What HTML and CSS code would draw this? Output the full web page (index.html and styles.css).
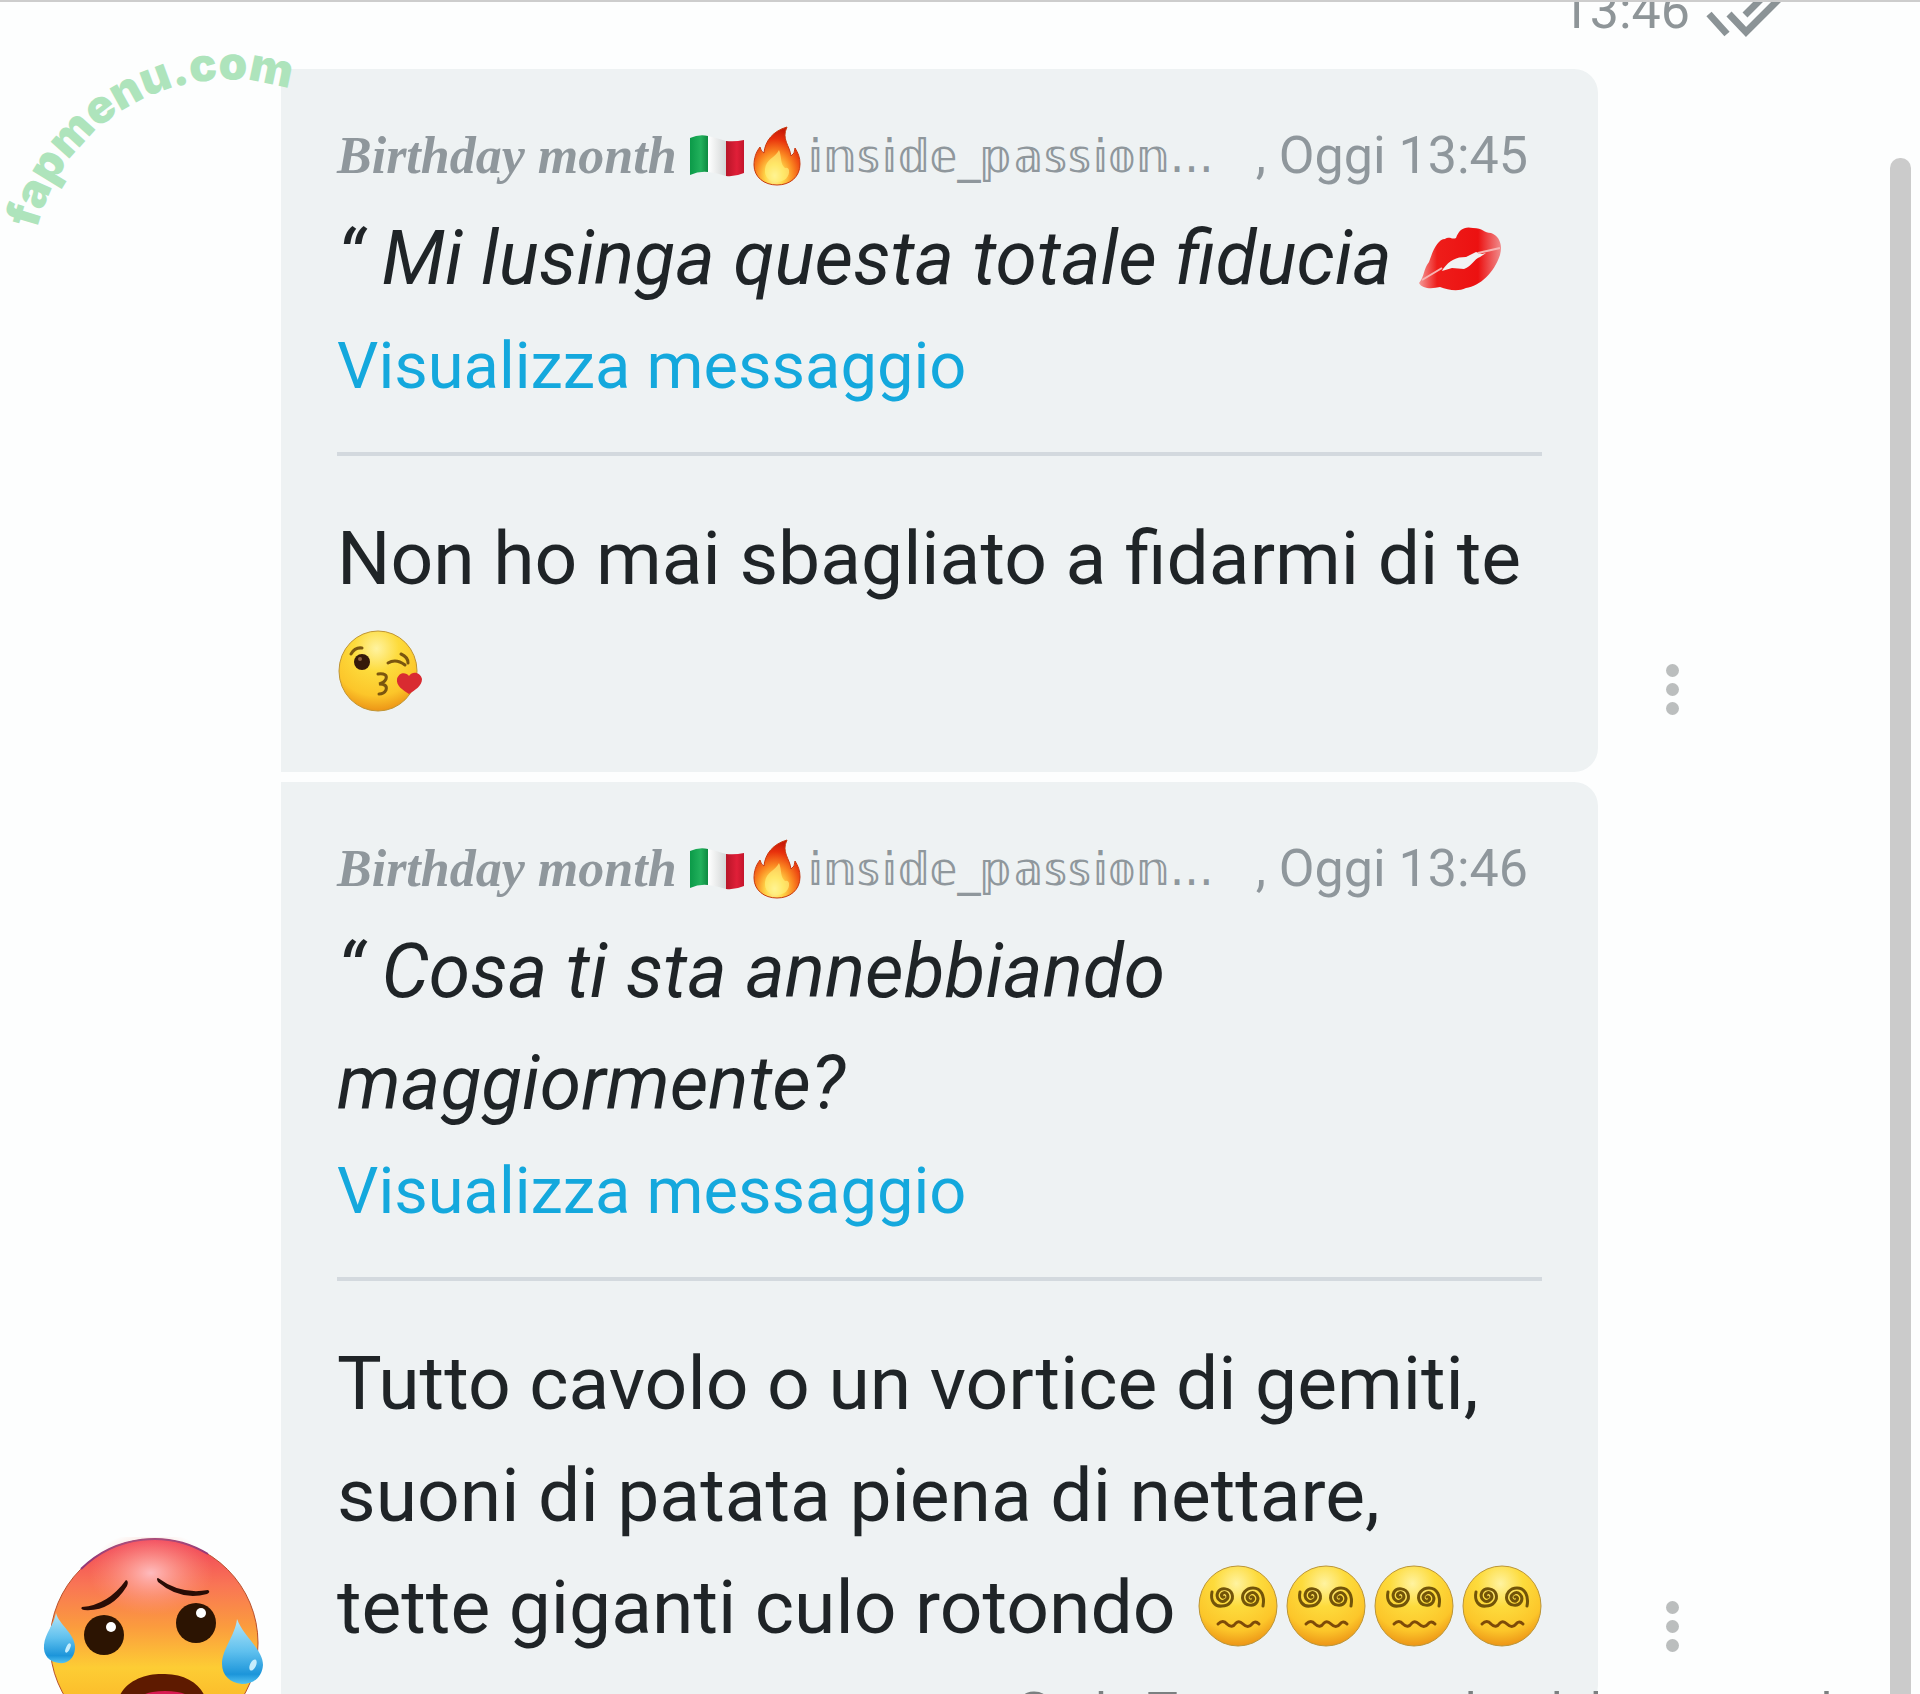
FILE: index.html
```html
<!DOCTYPE html>
<html lang="it">
<head>
<meta charset="utf-8">
<title>Messaggi</title>
<link rel="stylesheet" href="styles.css">
</head>
<body>
<svg class="defs" aria-hidden="true">
  <defs>
    <radialGradient id="face" cx="48%" cy="22%" r="82%">
      <stop offset="0" stop-color="#fff3a0"/><stop offset=".35" stop-color="#fddb3c"/><stop offset=".72" stop-color="#fcc62a"/><stop offset="1" stop-color="#e98a12"/>
    </radialGradient>
    <linearGradient id="hot" x1="0" y1="0" x2="0" y2="1">
      <stop offset="0" stop-color="#f0405a"/><stop offset=".22" stop-color="#f97555"/><stop offset=".42" stop-color="#fb9b3e"/><stop offset=".62" stop-color="#fdcd34"/><stop offset="1" stop-color="#f9a21c"/>
    </linearGradient>
    <radialGradient id="glow" cx="50%" cy="50%" r="50%">
      <stop offset="0" stop-color="#ffc0c4" stop-opacity=".95"/><stop offset="1" stop-color="#ff9a80" stop-opacity="0"/>
    </radialGradient>
    <linearGradient id="drop" x1="0" y1="0" x2="0" y2="1">
      <stop offset="0" stop-color="#b5e6f8"/><stop offset=".5" stop-color="#5fc0ee"/><stop offset=".85" stop-color="#1c95da"/><stop offset="1" stop-color="#55c4f2"/>
    </linearGradient>
    <radialGradient id="flame" cx="45%" cy="84%" r="80%">
      <stop offset="0" stop-color="#fffbc0"/><stop offset=".25" stop-color="#ffd84a"/><stop offset=".5" stop-color="#fb8a22"/><stop offset=".8" stop-color="#e8300c"/><stop offset="1" stop-color="#c81a08"/>
    </radialGradient>
    <linearGradient id="lip" x1="0" y1="0" x2="1" y2="0">
      <stop offset="0" stop-color="#f49a98"/><stop offset=".22" stop-color="#ee1d1a"/><stop offset=".72" stop-color="#ec1111"/><stop offset="1" stop-color="#f08c8c"/>
    </linearGradient>
    <linearGradient id="green" x1="0" y1="0" x2="1" y2="0"><stop offset="0" stop-color="#0b9a48"/><stop offset=".6" stop-color="#22b15c"/><stop offset="1" stop-color="#0d8a40"/></linearGradient>
    <linearGradient id="white" x1="0" y1="0" x2="1" y2="0"><stop offset="0" stop-color="#fff"/><stop offset="1" stop-color="#d4d7d7"/></linearGradient>
    <linearGradient id="red" x1="0" y1="0" x2="1" y2="0"><stop offset="0" stop-color="#b81528"/><stop offset=".6" stop-color="#e01f38"/><stop offset="1" stop-color="#c4162c"/></linearGradient>
  </defs>
  <symbol id="flag" viewBox="0 0 56 42">
    <path d="M1 3Q10-1 19 1V37Q10 36 1 40Z" fill="url(#green)"/>
    <path d="M19 1Q28 3 37 6V41Q28 38 19 37Z" fill="url(#white)"/>
    <path d="M37 6Q46 7 55 5V38Q46 42 37 41Z" fill="url(#red)"/>
  </symbol>
  <symbol id="fire" viewBox="0 0 48 60">
    <path d="M34 1C20 5 12 15 11 27Q8 26 7 21C3 26 1 32 1 39C1 51 11 59 24 59S47 51 47 38C47 31 45 27 42 22Q42 28 38 30C37 20 28 13 34 1Z" fill="url(#flame)" stroke="#c83a10" stroke-width="1"/>
    <path d="M26 24C22 32 13 33 12 43C11 51 17 56 24 56S37 51 36 44Q35 41 32 42C27 38 29 31 26 24Z" fill="#fff07a" opacity=".65"/>
  </symbol>
  <symbol id="lips" viewBox="0 0 84 66">
    <path d="M1 57C7 49 5 44 11 36C15 24 20 13 27 13C32 10 34 14 38 12C41 3 47 0 55 2C65 2 66 7 73 7C81 10 85 18 82 29C76 47 62 60 48 62C40 66 30 64 22 61C14 63 4 63 1 57Z" fill="url(#lip)"/>
    <path d="M25 43C32 34 38 31 48 31L58 26L64 28L68 27L62 31C56 33 54 40 46 43L34 42L24 45Z" fill="#f1f3f3"/>
    <path d="M4 54L24 42M60 27L82 22" stroke="#f7b5b3" stroke-width="2" fill="none"/>
  </symbol>
  <symbol id="dizzy" viewBox="0 0 88 84">
    <ellipse cx="44" cy="41" rx="39" ry="40" fill="url(#face)" stroke="#bb9537" stroke-width="1"/>
    <g fill="none" stroke="#725409" stroke-width="3" stroke-linecap="round">
      <path d="M18 27C16 36 21 42 28 41C35 41 40 35 38 29C36 23 27 22 24 27C21 33 27 39 32 35C36 32 33 26 29 28C26 30 28 33 30 32"/>
      <path d="M69 41C71 31 67 23 59 23C52 23 47 29 49 35C51 41 60 42 63 37C66 31 60 25 55 29C51 32 54 37 58 36C61 34 59 31 57 32"/>
      <path d="M24 59Q29 54 33 59Q38 64 42 58Q45 55 49 59Q54 64 58 59Q61 55 65 59" stroke="#7e4a08"/>
    </g>
  </symbol>
  <symbol id="kiss" viewBox="0 0 88 84">
    <ellipse cx="41" cy="43" rx="39" ry="40" fill="url(#face)" stroke="#c09533" stroke-width="1"/>
    <circle cx="25" cy="34" r="8" fill="#35190a"/><circle cx="23" cy="31" r="2" fill="#8c6040"/>
    <g fill="none" stroke="#7b560f" stroke-width="3" stroke-linecap="round">
      <path d="M14 26Q18 19 25 20M51 35Q59 30 68 37M64 26Q71 29 71 35"/>
      <path d="M41 46Q51 45 49 51Q47 55 42 56Q51 56 49 62Q47 66 42 66"/>
    </g>
    <path d="M72 66C66 62 59 58 60 51C62 44 69 44 72 48C76 42 84 45 85 51C85 58 78 62 72 66Z" fill="#d92b31"/>
  </symbol>
</svg>

<main class="chat">
  <div class="thread">
    <p class="status">
      <span>13:46</span>
      <svg class="ticks" viewBox="0 0 76 56" role="img" aria-label="Letto"><path d="M3 31L21 51M23 31L40 49L84 5M39 32L62 9" fill="none" stroke="#8b9396" stroke-width="7"/></svg>
    </p>

    <div class="row">
      <div class="side"></div>
      <article class="bubble">
        <header class="meta">
          <span class="name"><span class="script">Birthday month</span><svg class="flag" role="img" aria-label="Italia"><use href="#flag"/></svg><svg class="fire" role="img" aria-label="Fuoco"><use href="#fire"/></svg><span class="outline">𝕚𝕟𝕤𝕚𝕕𝕖_𝕡𝕒𝕤𝕤𝕚𝕠𝕟...</span></span>
          <time>, Oggi 13:45</time>
        </header>
        <blockquote class="quote">“ Mi lusinga questa totale fiducia <svg class="lips" role="img" aria-label="Bacio"><use href="#lips"/></svg></blockquote>
        <a class="link" href="#m1">Visualizza messaggio</a>
        <hr class="rule">
        <p class="text">Non ho mai sbagliato a fidarmi di te <svg class="emoji" role="img" aria-label="Faccina che manda un bacio"><use href="#kiss"/></svg></p>
      </article>
      <button class="more" type="button" aria-label="Altro"><i></i><i></i><i></i></button>
    </div>

    <div class="row">
      <div class="side">
        <svg class="avatar" viewBox="0 0 224 212" role="img" aria-label="Faccina accaldata">
          <circle cx="111" cy="106" r="104" fill="url(#hot)" stroke="#b8502c" stroke-width="1"/>
          <path d="M38 32A104 104 0 0 1 165 17" fill="none" stroke="#963a78" stroke-width="2"/>
          <ellipse cx="108" cy="36" rx="62" ry="42" fill="url(#glow)"/>
          <g fill="#2a0c05">
            <path d="M39 70Q65 68 83 43Q86 44 84 49Q68 75 41 73Q37 72 39 70Z"/>
            <path d="M115 41Q138 58 165 53Q168 55 164 57Q137 64 115 45Q113 41 115 41Z"/>
          </g>
          <circle cx="61" cy="98" r="20" fill="#2c1402"/><circle cx="153" cy="86" r="20" fill="#2c1402"/>
          <circle cx="68" cy="90" r="5" fill="#fff"/><circle cx="158" cy="76" r="5" fill="#fff"/>
          <path d="M76 160C84 142 105 136 122 137C142 137 157 147 162 160V190H76Z" fill="#5e1a00"/>
          <ellipse cx="122" cy="168" rx="32" ry="14" fill="#d81b52"/>
          <path d="M13 76C16 88 33 97 32 112C31 122 24 127 16 126C6 125 0 118 1 108C2 96 11 88 13 76Z" fill="url(#drop)"/>
          <path d="M194 82C200 99 220 112 220 128C219 140 211 147 199 147C187 146 179 138 179 127C179 112 192 99 194 82Z" fill="url(#drop)"/>
          <ellipse cx="25" cy="111" rx="2" ry="5" transform="rotate(25 25 111)" fill="#c6edfc"/>
          <ellipse cx="210" cy="128" rx="3" ry="6" transform="rotate(25 210 128)" fill="#c6edfc"/>
        </svg>
      </div>
      <article class="bubble">
        <header class="meta">
          <span class="name"><span class="script">Birthday month</span><svg class="flag" role="img" aria-label="Italia"><use href="#flag"/></svg><svg class="fire" role="img" aria-label="Fuoco"><use href="#fire"/></svg><span class="outline">𝕚𝕟𝕤𝕚𝕕𝕖_𝕡𝕒𝕤𝕤𝕚𝕠𝕟...</span></span>
          <time>, Oggi 13:46</time>
        </header>
        <blockquote class="quote">“ Cosa ti sta annebbiando maggiormente?</blockquote>
        <a class="link" href="#m2">Visualizza messaggio</a>
        <hr class="rule">
        <p class="text">Tutto cavolo o un vortice di gemiti, suoni di patata piena di nettare,<br>tette giganti culo rotondo <span class="faces"><svg class="emoji" role="img" aria-label="Faccina stordita"><use href="#dizzy"/></svg><svg class="emoji" role="img" aria-label="Faccina stordita"><use href="#dizzy"/></svg><svg class="emoji" role="img" aria-label="Faccina stordita"><use href="#dizzy"/></svg><svg class="emoji" role="img" aria-label="Faccina stordita"><use href="#dizzy"/></svg></span></p>
      </article>
      <button class="more" type="button" aria-label="Altro"><i></i><i></i><i></i></button>
    </div>
  </div>
  <div class="scrollbar"></div>
</main>

<svg class="brand" viewBox="0 0 320 250" role="img" aria-label="fapmenu.com">
  <path id="arc" d="M37 229A197 197 0 0 1 401 182" fill="none"/>
  <text><textPath href="#arc">fapmenu.com</textPath></text>
</svg>
<p class="caption">Code Tua mense a the del un caso d</p>
</body>
</html>
```

FILE: styles.css
```css
* { box-sizing: border-box; }
body {
  margin: 0;
  height: 100vh;
  overflow: hidden;
  position: relative;
  background: #fdfefe;
  color: #1f2427;
  font-family: Roboto, "Liberation Sans", sans-serif;
}
p, blockquote { margin: 0; }
.defs { position: absolute; width: 0; height: 0; }

.chat {
  display: flex;
  height: 100%;
  border-top: 2px solid #cdcdcd;
}
.thread { flex: 1; min-width: 0; overflow: hidden; }

.status {
  display: flex;
  justify-content: flex-end;
  align-items: center;
  gap: 16px;
  margin: -37px 108px 12px 0;
  font-size: 52px;
  line-height: 92px;
  color: #8e9598;
}
.ticks { width: 76px; height: 56px; overflow: visible; }

.row { display: flex; margin-bottom: 10px; }
.side {
  flex: 0 0 281px;
  display: flex;
  justify-content: flex-end;
  align-items: flex-end;
}
.avatar { width: 224px; height: 212px; margin: 0 14px -40px 0; }

.bubble {
  flex: 0 1 1317px;
  min-width: 0;
  padding: 41px 56px 46px;
  border-radius: 0 24px 24px 0;
  background: #eef2f3;
}
.meta {
  display: flex;
  justify-content: space-between;
  padding-right: 14px;
  font-size: 52px;
  line-height: 92px;
  color: #8f979c;
  white-space: nowrap;
}
.name { display: flex; align-items: center; }
.script { font-family: Z003, "URW Chancery L", "Liberation Serif", serif; font-size: 52px; font-style: italic; font-weight: bold; }
.outline { font-family: "DejaVu Sans", sans-serif; font-size: 46px; }
.flag { width: 56px; height: 42px; margin: 0 8px 0 12px; }
.fire { width: 48px; height: 60px; margin-right: 6px; }

.quote { font-size: 75px; font-style: italic; line-height: 112px; }
.lips { width: 84px; height: 66px; margin-left: 8px; vertical-align: -8px; }
.link {
  display: block;
  font-size: 65px;
  line-height: 104px;
  color: #14a8dd;
  text-decoration: none;
}
.rule { height: 4px; margin: 34px 0 46px; border: 0; background: #d3d9de; }
.text { margin-right: -12px; font-size: 75px; line-height: 112px; }
.emoji { width: 88px; height: 84px; vertical-align: -16px; }
.faces { white-space: nowrap; }

.more {
  flex: none;
  align-self: flex-end;
  display: flex;
  flex-direction: column;
  gap: 6px;
  margin: 0 0 57px 48px;
  padding: 0 20px;
  height: 51px;
  border: 0;
  background: none;
}
.more i { width: 13px; height: 13px; border-radius: 50%; background: #bbbebe; }

.scrollbar {
  flex: 0 0 21px;
  margin: 156px 9px 0 0;
  border-radius: 10px 10px 0 0;
  background: #cbcbcb;
}

.brand {
  position: absolute;
  top: 0;
  left: 0;
  width: 320px;
  height: 250px;
  font: 900 46px Inter, "Liberation Sans", sans-serif;
  fill: #aee4bc;
}
.caption {
  position: absolute;
  right: 88px;
  bottom: -46px;
  font: 50px/60px "Liberation Sans", sans-serif;
  color: #7b8081;
  white-space: nowrap;
}
```
